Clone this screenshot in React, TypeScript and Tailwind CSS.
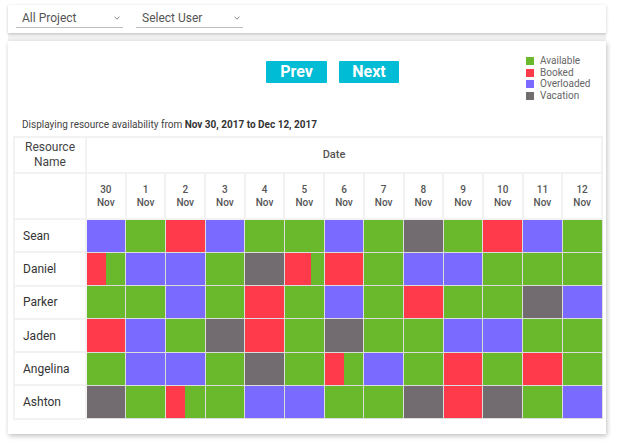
import React from 'react';

type Cell = string;

const COLORS: Record<string, string> = {
  G: 'bg-[#6ab92c]',
  R: 'bg-[#ff3a4a]',
  P: 'bg-[#7a6aff]',
  V: 'bg-[#726c70]',
};

const dates = ['30', '1', '2', '3', '4', '5', '6', '7', '8', '9', '10', '11', '12'];

// 'RG' = partially booked day (red on the left, green on the right)
const rows: { name: string; days: Cell[] }[] = [
  { name: 'Sean', days: ['P', 'G', 'R', 'P', 'G', 'G', 'P', 'G', 'V', 'G', 'R', 'P', 'G'] },
  { name: 'Daniel', days: ['RG', 'P', 'P', 'G', 'V', 'RG2', 'R', 'G', 'P', 'P', 'G', 'G', 'G'] },
  { name: 'Parker', days: ['G', 'G', 'P', 'G', 'R', 'G', 'P', 'G', 'R', 'G', 'G', 'V', 'P'] },
  { name: 'Jaden', days: ['R', 'P', 'G', 'V', 'R', 'G', 'V', 'G', 'G', 'P', 'P', 'G', 'G'] },
  { name: 'Angelina', days: ['G', 'P', 'P', 'G', 'V', 'G', 'RG', 'P', 'G', 'R', 'G', 'R', 'G'] },
  { name: 'Ashton', days: ['V', 'G', 'RG', 'G', 'P', 'P', 'G', 'G', 'V', 'R', 'V', 'G', 'P'] },
];

const legend = [
  { label: 'Available', color: 'bg-[#6ab92c]' },
  { label: 'Booked', color: 'bg-[#ff3a4a]' },
  { label: 'Overloaded', color: 'bg-[#7a6aff]' },
  { label: 'Vacation', color: 'bg-[#726c70]' },
];

function Chevron() {
  return (
    <svg width="6" height="4" viewBox="0 0 6 4" className="text-[#888]">
      <path d="M0.5 0.8 L3 3.2 L5.5 0.8" fill="none" stroke="currentColor" strokeWidth="1" />
    </svg>
  );
}

function Select({ label, width }: { label: string; width: string }) {
  return (
    <div className={`${width} h-[20px] flex items-center justify-between pl-[6px] pr-[3px] border-b border-[#bdbdbd]`}>
      <span className="text-[12px] text-[#555]">{label}</span>
      <Chevron />
    </div>
  );
}

function DayCell({ c }: { c: Cell }) {
  if (c === 'RG' || c === 'RG2') {
    return (
      <div className="flex h-full w-full">
        <div className={`${c === 'RG2' ? 'w-[68%]' : 'w-1/2'} bg-[#ff3a4a]`} />
        <div className="flex-1 bg-[#6ab92c]" />
      </div>
    );
  }
  return <div className={`h-full w-full ${COLORS[c]}`} />;
}

export default function App() {
  return (
    <div className="w-[618px] h-[447px] bg-white pt-[5px] pl-[8px] font-['Roboto',sans-serif]">
      {/* ─── Filters ─── */}
      <div className="w-[598px] h-[28px] bg-white flex items-end gap-[13px] pl-[8px] pb-[5px] shadow-[0_1px_3px_rgba(0,0,0,0.22)] relative z-10">
        <Select label="All Project" width="w-[107px]" />
        <Select label="Select User" width="w-[107px]" />
      </div>

      <div className="w-[598px] h-[8px] bg-[#f1f1f1]" />

      {/* ─── Main card ─── */}
      <div className="w-[598px] h-[393px] bg-white pl-[5px] shadow-[1px_2px_5px_rgba(0,0,0,0.25)]">
        <div className="flex h-[78px]">
          <div className="flex gap-[12px] ml-[253px] mt-[20px] h-[22px]">
            <button className="w-[61px] h-[22px] bg-[#00bcd4] text-white text-[16px] font-bold leading-none rounded-[1px]">Prev</button>
            <button className="w-[60px] h-[22px] bg-[#00bcd4] text-white text-[16px] font-bold leading-none rounded-[1px]">Next</button>
          </div>
          <div className="ml-[127px] mt-[14px] flex flex-col">
            {legend.map(l => (
              <div key={l.label} className="flex items-center gap-[6px] h-[11.7px]">
                <div className={`w-[8px] h-[8px] ${l.color}`} />
                <span className="text-[10px] leading-none text-[#666]">{l.label}</span>
              </div>
            ))}
          </div>
        </div>

        <p className="text-[10px] text-[#444] pl-[9px] h-[17px] leading-[12px]">
          Displaying resource availability from <b className="text-[#333]">Nov 30, 2017 to Dec 12, 2017</b>
        </p>

        {/* ─── Availability grid ─── */}
        <table className="w-[590px] border-collapse table-fixed">
          <colgroup>
            <col className="w-[72px]" />
            {dates.map(d => <col key={d} />)}
          </colgroup>
          <thead>
            <tr className="h-[36px]">
              <th className="border-2 border-[#f2f2f2] text-[12px] font-normal text-[#444] leading-[15px]">Resource<br />Name</th>
              <th colSpan={13} className="border-2 border-[#f2f2f2] text-[11px] font-medium text-[#555] pr-[20px]">Date</th>
            </tr>
            <tr className="h-[46px]">
              <th className="border-2 border-[#f2f2f2]" />
              {dates.map((d, i) => (
                <th key={d} className="border-2 border-[#f2f2f2] text-[10px] font-medium text-[#555] leading-[13px]">
                  {d}<br />{i === 0 ? 'Nov' : 'Nov'}
                </th>
              ))}
            </tr>
          </thead>
          <tbody>
            {rows.map(r => (
              <tr key={r.name} className="h-[33.3px]">
                <td className="border-2 border-[#f2f2f2] text-[12px] text-[#333] pl-[8px]">{r.name}</td>
                {r.days.map((c, i) => (
                  <td key={i} className="border border-[#dcdcdc] p-0 h-[33.3px]">
                    <DayCell c={c} />
                  </td>
                ))}
              </tr>
            ))}
          </tbody>
        </table>
      </div>
    </div>
  );
}
